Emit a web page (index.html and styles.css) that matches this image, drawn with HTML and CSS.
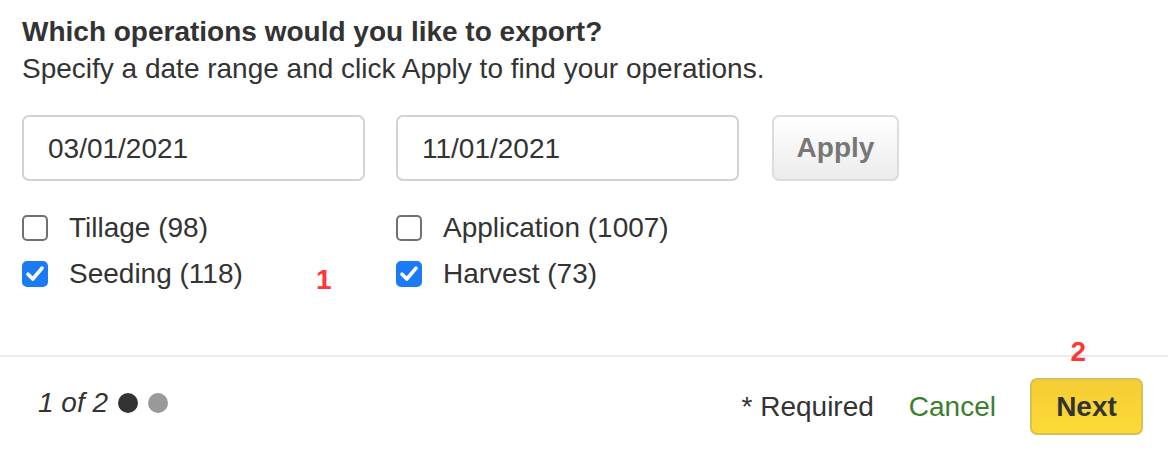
FILE: index.html
```html
<!DOCTYPE html>
<html lang="en">
<head>
<meta charset="utf-8">
<title>Export operations</title>
<link rel="stylesheet" href="styles.css">
</head>
<body>
<div class="dialog">
  <div class="content">
    <h2 class="title">Which operations would you like to export?</h2>
    <p class="subtitle">Specify a date range and click Apply to find your operations.</p>
    <div class="dates">
      <div class="date-input">03/01/2021</div>
      <div class="date-input">11/01/2021</div>
      <button class="apply">Apply</button>
    </div>
    <div class="ops">
      <label class="op"><span class="box"></span><span class="op-label">Tillage (98)</span></label>
      <label class="op"><span class="box"></span><span class="op-label">Application (1007)</span></label>
      <label class="op"><span class="box checked"><svg viewBox="0 0 26 26" width="26" height="26"><path d="M6 13.2 L10.8 18 L20 7.2" fill="none" stroke="#fff" stroke-width="3.6" stroke-linecap="round" stroke-linejoin="round"/></svg></span><span class="op-label">Seeding (118)</span></label>
      <label class="op"><span class="box checked"><svg viewBox="0 0 26 26" width="26" height="26"><path d="M6 13.2 L10.8 18 L20 7.2" fill="none" stroke="#fff" stroke-width="3.6" stroke-linecap="round" stroke-linejoin="round"/></svg></span><span class="op-label">Harvest (73)</span></label>
    </div>
    <span class="marker marker-1">1</span>
  </div>
  <div class="footer">
    <div class="steps">
      <span class="step-text">1 of 2</span>
      <span class="dot dot-active"></span>
      <span class="dot"></span>
    </div>
    <div class="actions">
      <span class="required">* Required</span>
      <a class="cancel">Cancel</a>
      <button class="next">Next</button>
      <span class="marker marker-2">2</span>
    </div>
  </div>
</div>
</body>
</html>
```
FILE: styles.css
```css
* { box-sizing: border-box; }
html, body {
  margin: 0;
  padding: 0;
  background: #fff;
}
body {
  font-family: "Liberation Sans", Arial, Helvetica, sans-serif;
  color: #333;
  font-size: 28px;
}
.dialog {
  width: 1168px;
  height: 450px;
  display: flex;
  flex-direction: column;
}
.content {
  position: relative;
  padding: 13px 22px 0 22px;
  height: 355px;
}
.title {
  margin: 0;
  font-size: 28px;
  font-weight: bold;
  line-height: 37px;
  color: #333;
}
.subtitle {
  margin: 0;
  font-size: 28px;
  line-height: 37px;
  color: #333;
}
.dates {
  display: flex;
  gap: 31px;
  margin-top: 28px;
}
.date-input {
  width: 343px;
  height: 66px;
  border: 2px solid #d2d2d2;
  border-radius: 7px;
  padding-left: 24px;
  padding-top: 2px;
  display: flex;
  align-items: center;
  font-size: 28px;
  color: #333;
  background: #fff;
}
.apply {
  margin-left: 2px;
  width: 127px;
  height: 66px;
  border: 2px solid #dcdcdc;
  border-radius: 7px;
  background: linear-gradient(#ffffff, #ececec);
  font-family: inherit;
  font-size: 28px;
  font-weight: bold;
  color: #777;
  padding: 0;
}
.ops {
  display: grid;
  grid-template-columns: 374px 374px;
  grid-auto-rows: 46px;
  margin-top: 24px;
}
.op {
  display: flex;
  align-items: center;
  gap: 21px;
}
.box {
  width: 26px;
  height: 26px;
  border: 2px solid #717171;
  border-radius: 5px;
  background: #fff;
  display: flex;
  align-items: center;
  justify-content: center;
  flex: none;
  position: relative;
}
.box.checked {
  background: #1b7bf5;
  border-color: #1b7bf5;
}
.box svg {
  display: block;
  flex: none;
  margin: -2px;
}
.op-label {
  font-size: 28px;
  color: #333;
  line-height: 32px;
}
.marker {
  position: absolute;
  color: #ff3636;
  font-weight: bold;
  font-size: 28px;
  line-height: 32px;
}
.marker-1 {
  left: 316px;
  top: 264px;
}
.marker-2 {
  right: 57px;
  top: -42px;
}
.footer {
  border-top: 2px solid #ececec;
  display: flex;
  align-items: center;
  justify-content: space-between;
  padding: 21px 25px 15px 38px;
  flex: 1;
}
.steps {
  display: flex;
  align-items: center;
  gap: 10px;
  margin-top: -7px;
}
.step-text {
  font-style: italic;
  font-size: 28px;
  color: #333;
}
.dot {
  width: 20px;
  height: 20px;
  border-radius: 50%;
  background: #999;
}
.dot-active { background: #333; }
.actions {
  position: relative;
  display: flex;
  align-items: center;
}
.required {
  font-size: 28px;
  color: #333;
  margin-right: 35px;
}
.cancel {
  font-size: 28px;
  color: #3b7f2c;
  margin-right: 34px;
  cursor: pointer;
}
.next {
  width: 113px;
  height: 57px;
  border: 2px solid #dcbf52;
  border-radius: 7px;
  background: linear-gradient(#f3cd35, #fddb36);
  font-family: inherit;
  font-size: 28px;
  font-weight: bold;
  color: #333;
  padding: 0;
}
```
